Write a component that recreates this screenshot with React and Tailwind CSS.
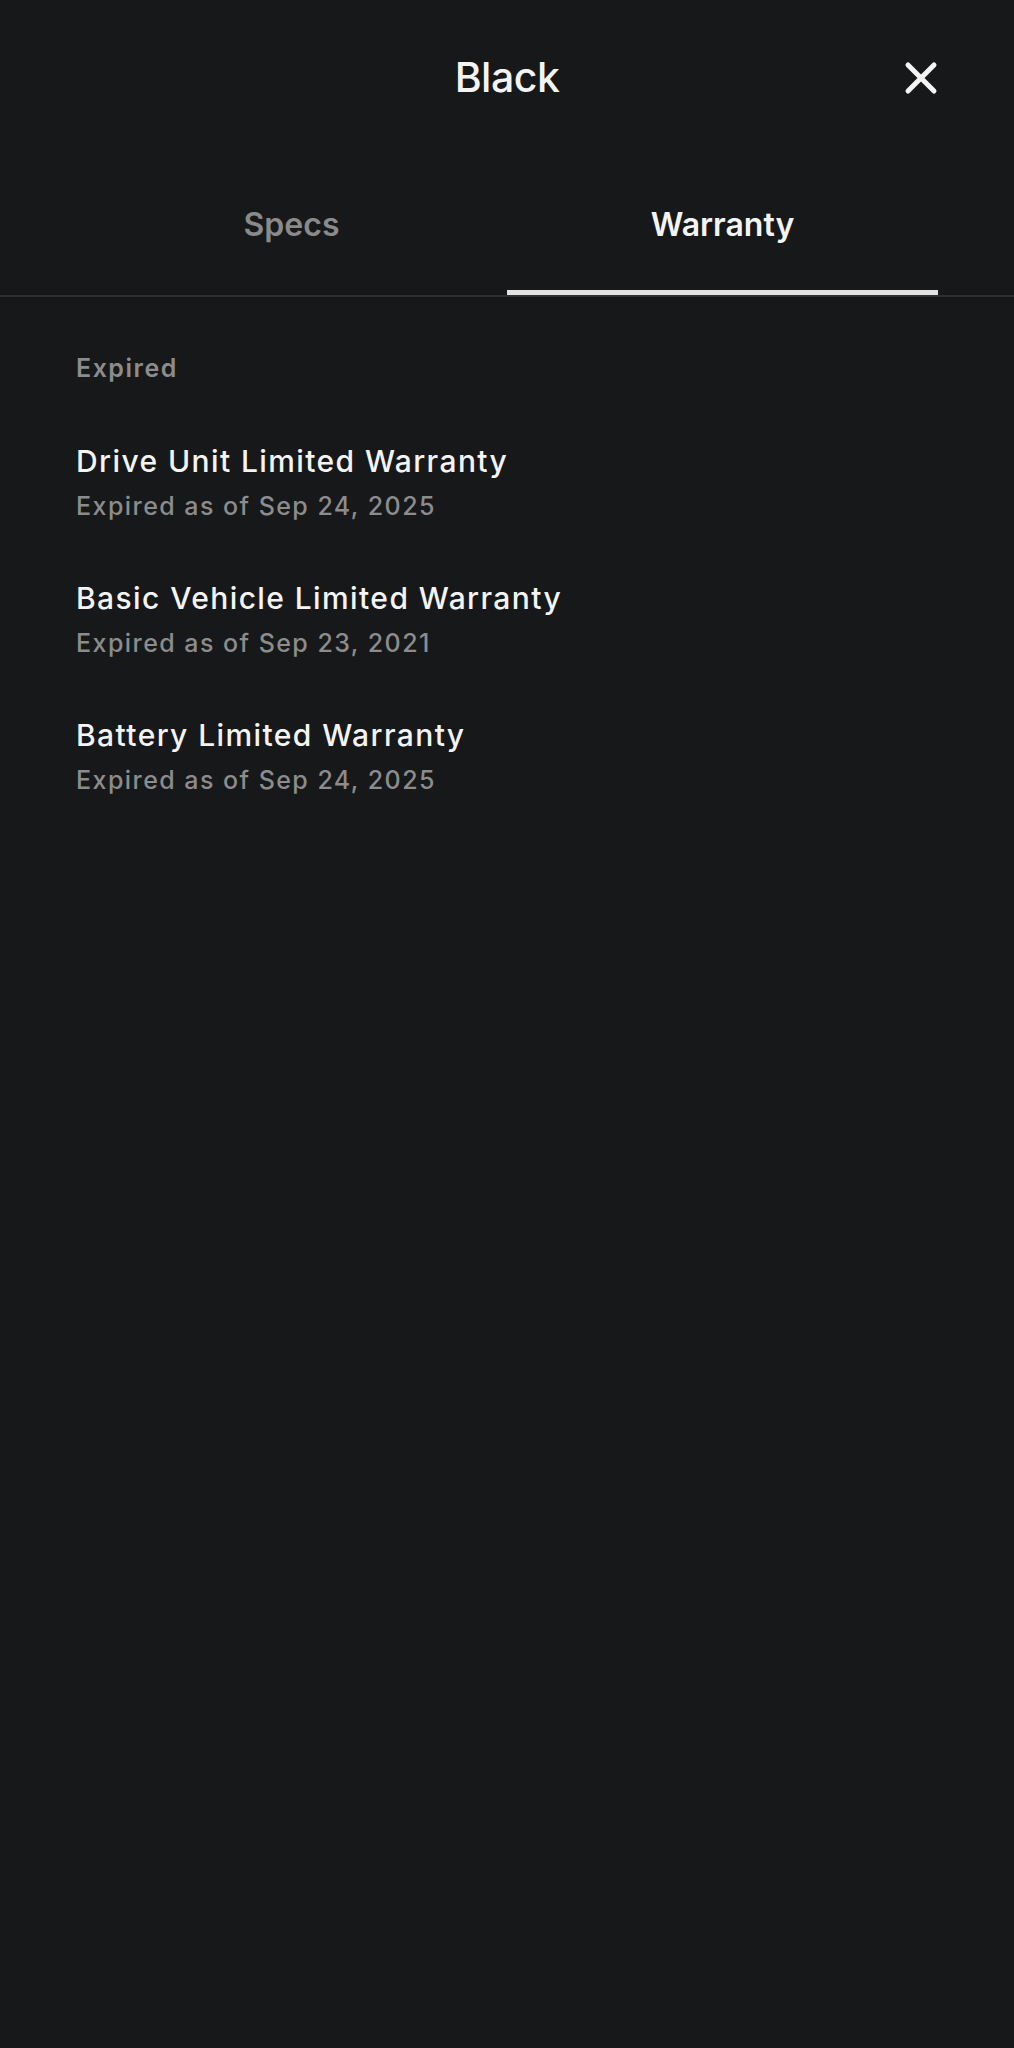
import { useState } from 'react';

const WARRANTIES = [
  { name: 'Drive Unit Limited Warranty', status: 'Expired as of Sep 24, 2025' },
  { name: 'Basic Vehicle Limited Warranty', status: 'Expired as of Sep 23, 2021' },
  { name: 'Battery Limited Warranty', status: 'Expired as of Sep 24, 2025' },
];

function CloseIcon() {
  return (
    <svg width="34" height="34" viewBox="0 0 34 34" fill="none">
      <path d="M4 4L30 30M30 4L4 30" stroke="#f5f5f5" strokeWidth="5" strokeLinecap="round" />
    </svg>
  );
}

export default function App() {
  const [tab, setTab] = useState('warranty');

  return (
    <div className="min-h-[2048px] bg-[#17181a] text-[#f4f4f4]" style={{ fontFamily: 'Inter, "Noto Sans", sans-serif' }}>
      {/* Header */}
      <div className="h-[155px] px-[76px] flex items-center">
        <div className="w-[34px]" />
        <h1 className="flex-1 text-center text-[41px] font-medium tracking-[-0.5px]">Black</h1>
        <button className="w-[34px] h-[34px] flex items-center justify-center">
          <CloseIcon />
        </button>
      </div>

      {/* Tabs */}
      <div className="border-b-2 border-[#2e2f31]">
        <div className="px-[76px] grid grid-cols-2">
          {[
            { id: 'specs', label: 'Specs' },
            { id: 'warranty', label: 'Warranty' },
          ].map((t) => (
            <button
              key={t.id}
              onClick={() => setTab(t.id)}
              className={`h-[140px] pt-[4px] flex items-center justify-center text-[32px] font-semibold border-b-[5px] ${
                tab === t.id ? 'text-[#f4f4f4] border-[#e2e2e2]' : 'text-[#8a8a8a] border-transparent'
              }`}
            >
              {t.label}
            </button>
          ))}
        </div>
      </div>

      {/* Warranty list */}
      <div className="px-[76px] pt-[56px]">
        <div className="text-[25px] leading-[30px] font-semibold tracking-[1.5px] text-[#8c8c8c]">Expired</div>
        <div className="mt-[60px] flex flex-col gap-[59px]">
          {WARRANTIES.map((w) => (
            <div key={w.name}>
              <div className="text-[30px] leading-[36px] font-medium tracking-[1.4px]">{w.name}</div>
              <div className="mt-[12px] text-[25px] leading-[30px] font-medium tracking-[1.45px] text-[#8c8c8c]">{w.status}</div>
            </div>
          ))}
        </div>
      </div>
    </div>
  );
}
